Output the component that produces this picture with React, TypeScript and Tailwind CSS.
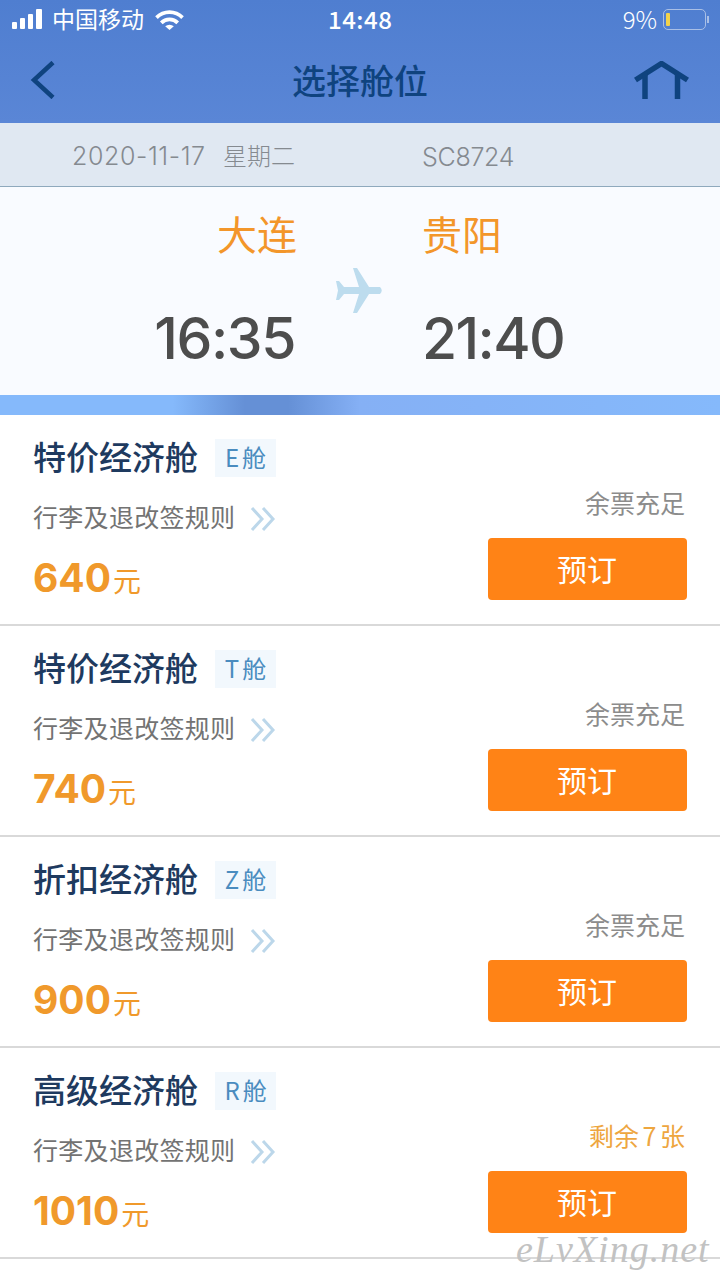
const cabins = [
  { name: "特价经济舱", code: "E", price: "640", stock: "余票充足", low: false },
  { name: "特价经济舱", code: "T", price: "740", stock: "余票充足", low: false },
  { name: "折扣经济舱", code: "Z", price: "900", stock: "余票充足", low: false },
  { name: "高级经济舱", code: "R", price: "1010", stock: "剩余 7 张", low: true },
];

function StatusBar() {
  return (
    <div className="h-[38px] flex items-center justify-between pl-[12px] pr-[11px] text-white relative">
      <div className="flex items-center">
        <div className="flex items-end gap-[3px] h-[20px]">
          <div className="w-[5px] h-[7px] rounded-[1px] bg-white" />
          <div className="w-[5px] h-[11px] rounded-[1px] bg-white" />
          <div className="w-[5px] h-[15px] rounded-[1px] bg-white" />
          <div className="w-[6px] h-[20px] rounded-[1px] bg-white" />
        </div>
        <span className="ml-[10px] text-[23px] leading-none mb-[1px]">中国移动</span>
        <svg width="29" height="21" viewBox="0 0 30 22" className="ml-[11px]">
          <path d="M0 7.5 A21 21 0 0 1 30 7.5 L27.3 10.5 A17 17 0 0 0 2.7 10.5 Z" fill="white" />
          <path d="M5 13 A14 14 0 0 1 25 13 L22.2 16 A10 10 0 0 0 7.8 16 Z" fill="white" />
          <path d="M10.5 18.2 A6.5 6.5 0 0 1 19.5 18.2 L15 22 Z" fill="white" />
        </svg>
      </div>
      <span className="absolute left-[328px] top-[7px] text-[24px] leading-none font-medium tracking-[0.5px]">14:48</span>
      <div className="flex items-center">
        <span className="text-[24px] leading-none font-light mr-[6px]">9%</span>
        <div className="w-[43px] h-[21px] rounded-[5px] border-[1.5px] border-[#a9bfe6] pl-[2px] py-[3px]">
          <div className="w-[4px] h-full rounded-[1px] bg-[#f2d24b]" />
        </div>
        <div className="w-[2px] h-[7px] bg-[#a9bfe6] ml-[1px]" />
      </div>
    </div>
  );
}

function NavBar() {
  return (
    <div className="h-[85px] relative flex items-center justify-between pl-[30px] pr-[30px] pb-[1px]">
      <svg width="26" height="38" viewBox="0 0 26 38" fill="none" stroke="#0f437f" strokeWidth="4.5">
        <path d="M23 1.5 L4 19 L23 36.5" />
      </svg>
      <span className="absolute left-0 right-0 text-center text-[34px] font-medium leading-none text-[#0f437f] pb-[1px]">选择舱位</span>
      <svg width="56" height="38" viewBox="0 0 56 38" fill="none" stroke="#0f437f" strokeWidth="5.5">
        <path d="M1.5 19 L27.5 2.5 L53.5 19" />
        <path d="M11 12 V38 M43.5 12 V38" />
      </svg>
    </div>
  );
}

function Plane() {
  return (
    <svg width="48" height="46" viewBox="0 0 48 46" fill="#bddcee">
      <path d="M17 0 L21 0 L33 19 L44 19 Q47.5 22.5 44 26 L33 26 L21 45 L17 45 L23 26 L8 26 L3 32 L0 32 L2 22.5 L0 13 L3 13 L8 19 L23 19 Z" />
    </svg>
  );
}

function FlightPanel() {
  return (
    <div className="h-[208px] bg-[#f9fbff] relative flex">
      <div className="w-[297px] flex flex-col items-end">
        <span className="mt-[23px] text-[40px] leading-[46px] text-[#f3962a]">大连</span>
        <span className="mt-[51px] mr-[2px] text-[57px] leading-[64px] text-[#4d4d4d] font-['Inter',sans-serif] tracking-[-1.4px] font-medium">16:35</span>
      </div>
      <div className="absolute left-[336px] top-[81px]">
        <Plane />
      </div>
      <div className="ml-[126px] flex flex-col items-start">
        <span className="mt-[23px] -ml-[1px] text-[40px] leading-[46px] text-[#f3962a]">贵阳</span>
        <span className="mt-[51px] -ml-[1px] text-[57px] leading-[64px] text-[#4d4d4d] font-['Inter',sans-serif] tracking-[-1.6px] font-medium">21:40</span>
      </div>
    </div>
  );
}

function CabinRow({ name, code, price, stock, low }: (typeof cabins)[number]) {
  return (
    <div className="h-[211px] border-b-2 border-[#d9d9d9] flex justify-between pl-[33px] pr-[33px]">
      <div className="flex flex-col">
        <div className="flex items-center mt-[24px] h-[38px]">
          <span className="text-[33px] leading-none font-medium text-[#1e3a5f] w-[182px] mb-[3px]">{name}</span>
          <span className="w-[61px] h-[38px] bg-[#f2f8fd] flex items-center justify-center text-[24px] leading-none text-[#4a8cbf] gap-[3px]">
            <span className="mb-[2px]">{code}</span>
            <span className="mb-[2px]">舱</span>
          </span>
        </div>
        <div className="flex items-center mt-[22px] h-[38px]">
          <span className="text-[25px] leading-none text-[#737373] tracking-[0.3px] mb-[3px]">行李及退改签规则</span>
          <svg width="26" height="26" viewBox="0 0 26 26" fill="none" stroke="#bcd7ea" strokeWidth="3" className="ml-[15px] mt-[1px]">
            <path d="M2 2 L12 13 L2 24 M13 2 L23 13 L13 24" />
          </svg>
        </div>
        <div className="flex items-baseline mt-[19px] text-[#f0992b]">
          <span className="text-[39px] leading-[44px] font-bold font-['Inter',sans-serif]">{price}</span>
          <span className="text-[28px] leading-none ml-[2px]">元</span>
        </div>
      </div>
      <div className="flex flex-col items-end">
        <span className={`mt-[75px] mr-[2px] text-[25px] leading-none [word-spacing:-2px] ${low ? "text-[#eea63f]" : "text-[#8c8c8c]"}`}>{stock}</span>
        <button className="mt-[23px] w-[199px] h-[62px] rounded-[4px] bg-[#ff8316] text-white text-[30px] leading-none pb-[3px] pr-[1px]">预订</button>
      </div>
    </div>
  );
}

export default function App() {
  return (
    <div className="w-[720px] h-[1280px] bg-white overflow-hidden relative font-['Noto_Sans_CJK_SC','Noto_Sans_CJK_JP',sans-serif]">
      <div className="h-[123px] bg-gradient-to-b from-[#4f7ed0] to-[#5a86d6]">
        <StatusBar />
        <NavBar />
      </div>
      <div className="h-[64px] bg-[#e0e8f2] border-b border-[#8fa9bd] flex items-center text-[25px] leading-none text-[#858a90] font-['Inter','Noto_Sans_CJK_SC',sans-serif] font-light">
        <span className="ml-[72px] w-[151px] tracking-[0.6px] mt-[3px]">2020-11-17</span>
        <span className="w-[199px] font-['Noto_Sans_CJK_SC',sans-serif] font-light text-[24px]">星期二</span>
        <span className="tracking-[-0.3px] mt-[5px]">SC8724</span>
      </div>
      <FlightPanel />
      <div className="h-[20px] bg-[linear-gradient(90deg,#85b9fb_0%,#85b9fb_24%,#6590d6_34%,#6590d6_40%,#85b0f5_50%,#85b9fb_100%)]" />
      {cabins.map((c) => (
        <CabinRow key={c.code} {...c} />
      ))}
      <span className="absolute left-[516px] top-[1230px] text-[38px] leading-none italic text-[#c2c2c2] font-['Liberation_Serif',serif] tracking-[1px]">eLvXing.net</span>
    </div>
  );
}
